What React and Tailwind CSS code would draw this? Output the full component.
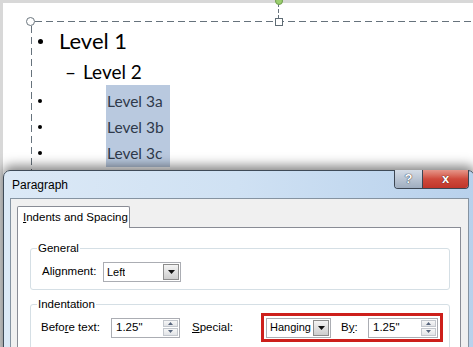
import React from 'react';

const dialogFont = "font-['Liberation_Sans','Arial',sans-serif]";

const DropButton = () => (
  <div className="flex h-full w-[16px] shrink-0 items-center justify-center border border-[#8c8c8c] bg-linear-to-b from-[#f4f4f4] to-[#cdcdcd]">
    <svg width="7" height="4" viewBox="0 0 7 4">
      <path d="M0 0h7L3.5 4z" fill="#111" />
    </svg>
  </div>
);

const Spinner = () => (
  <div className="flex h-full w-[15px] flex-col gap-px">
    <div className="flex flex-1 items-center justify-center border border-[#c3c7cd] bg-linear-to-b from-[#f7f7f7] to-[#e2e4e7]">
      <svg width="5" height="3" viewBox="0 0 5 3">
        <path d="M0 3h5L2.5 0z" fill="#56657d" />
      </svg>
    </div>
    <div className="flex flex-1 items-center justify-center border border-[#c3c7cd] bg-linear-to-b from-[#f7f7f7] to-[#e2e4e7]">
      <svg width="5" height="3" viewBox="0 0 5 3">
        <path d="M0 0h5L2.5 3z" fill="#56657d" />
      </svg>
    </div>
  </div>
);

const Combo = ({ value, width }) => (
  <div className={`flex h-[20px] items-center justify-between border border-[#abadb3] bg-white p-px ${width}`}>
    <span className="overflow-hidden whitespace-nowrap pl-[2px] text-[11px]">{value}</span>
    <DropButton />
  </div>
);

const SpinBox = ({ value, width }) => (
  <div className={`flex h-[20px] items-center justify-between border border-[#abadb3] bg-white p-px ${width}`}>
    <span className="pl-[3px]">{value}</span>
    <Spinner />
  </div>
);

const Slide = () => (
  <div className="relative ml-[3px] mt-[3px] h-[344px] bg-white font-['Lato','Noto_Sans',sans-serif]">
    {/* selection frame */}
    <div className="absolute left-[32px] top-[18px] h-px w-[460px] bg-[repeating-linear-gradient(90deg,#66727c_0_7px,transparent_7px_11px)]" />
    <div className="absolute left-[28px] top-[23px] h-[150px] w-px bg-[repeating-linear-gradient(180deg,#66727c_0_7px,transparent_7px_11px)]" />
    <div className="absolute left-[23px] top-[14px] h-[9px] w-[9px] rounded-full border border-[#6b767e] bg-white" />
    <div className="absolute left-[272px] top-[15px] h-[8px] w-[8px] border border-[#5f6c75] bg-white" />
    <div className="absolute left-[275px] top-0 h-[15px] w-px bg-[repeating-linear-gradient(180deg,#66727c_0_4px,transparent_4px_6px)]" />
    <div className="absolute left-[272px] top-[-6px] h-[8px] w-[8px] rounded-full border border-[#6f9e4b] bg-[#9bcf6f]" />

    <div className="pt-[25px]">
      <div className="flex h-[26px] items-center pl-[35px] text-[22px] text-black">
        <div className="h-[5px] w-[5px] rounded-full bg-black" />
        <span className="ml-[16px] leading-none">Level 1</span>
      </div>
      <div className="mt-[4px] flex h-[27px] items-center pl-[62px] text-[19px] text-black">
        <span className="w-[18px] leading-none">–</span>
        <span className="leading-none">Level 2</span>
      </div>
      <div className="flex">
        <div className="flex flex-col pl-[35px] pt-[3px]">
          {[0, 1, 2].map((i) => (
            <div key={i} className="flex h-[26px] items-center">
              <div className="h-[4px] w-[4px] rounded-full bg-black" />
            </div>
          ))}
        </div>
        <div className="ml-[64px] flex w-[64px] flex-col bg-[#b9c9df] pt-[4px] text-[15.5px] text-[#2f394b]">
          {['Level 3a', 'Level 3b', 'Level 3c'].map((t) => (
            <div key={t} className="flex h-[26px] items-center pl-px leading-none">
              {t}
            </div>
          ))}
        </div>
      </div>
    </div>
  </div>
);

const Dialog = () => (
  <div
    className={`absolute left-[3px] top-[170px] h-[190px] w-[472px] rounded-t-[7px] border border-[#3f4b58] bg-linear-to-r from-[#dce9f6] via-[#cfe1f3] to-[#b8d1ec] text-[11.5px] text-black shadow-[0_-4px_12px_rgba(0,0,0,0.5)] ${dialogFont}`}
  >
    <div className="flex h-[27px] items-center justify-between">
      <span className="pl-[8px] text-[12px]">Paragraph</span>
      <div className="mr-[5px] -mt-[1px] flex h-[19px] self-start overflow-hidden rounded-b-[4px] border border-t-0 border-[#3c4653]">
        <div className="flex w-[28px] items-center justify-center border-r border-[#3c4653] bg-linear-to-b from-[#d5dde7] to-[#9fadbf] text-[13px] font-bold text-white [text-shadow:0_0_1px_#2c3644,0_0_1px_#2c3644]">
          ?
        </div>
        <div className="flex w-[45px] items-center justify-center bg-linear-to-b from-[#e5968a] via-[#cf4a3c] to-[#c0352a] text-[13px] font-bold text-white [text-shadow:0_0_1px_#5a1a12,0_0_1px_#5a1a12]">
          x
        </div>
      </div>
    </div>
    <div className="ml-[6px] h-[170px] w-[459px] border border-[#8593a1] bg-[#f0f0f0]">
      <div className="relative z-10 ml-[6px] mt-[7px] flex h-[22px] w-[113px] items-center rounded-t-[2px] border border-b-0 border-[#898c95] bg-white pl-[5px]">
        <span>
          <span className="underline">I</span>ndents and Spacing
        </span>
      </div>
      <div className="-mt-px ml-[6px] h-[140px] w-[444px] border border-[#898c95] bg-white">
        <fieldset className="ml-[12px] mt-[13px] w-[420px] rounded-[3px] border border-[#d5dfe5] px-[6px] pb-[7px]">
          <legend className="px-px leading-[14px]">General</legend>
          <div className="mt-[7px] ml-[5px] flex items-center">
            <span className="w-[61px]">Alignment:</span>
            <Combo value="Left" width="w-[78px]" />
          </div>
        </fieldset>
        <fieldset className="ml-[12px] mt-[7px] w-[420px] rounded-[3px] border border-[#d5dfe5] px-[6px] pb-[10px]">
          <legend className="px-px leading-[14px]">Indentation</legend>
          <div className="mt-[2px] ml-[4px] flex h-[29px] items-center">
            <span className="w-[70px]">
              Befo<span className="underline">r</span>e text:
            </span>
            <SpinBox value={'1.25"'} width="w-[69px]" />
            <span className="ml-[12px] w-[69px]">
              <span className="underline">S</span>pecial:
            </span>
            <div className="flex h-[29px] w-[182px] items-center border-[3px] border-[#cd1f1b] px-[2px]">
              <Combo value="Hanging" width="w-[65px]" />
              <span className="ml-[10px] w-[27px]">
                B<span className="underline">y</span>:
              </span>
              <SpinBox value={'1.25"'} width="w-[70px]" />
            </div>
          </div>
        </fieldset>
      </div>
    </div>
  </div>
);

export default function App() {
  return (
    <div className="relative h-[347px] w-[473px] overflow-hidden bg-[#d8d8d8]">
      <Slide />
      <Dialog />
    </div>
  );
}
